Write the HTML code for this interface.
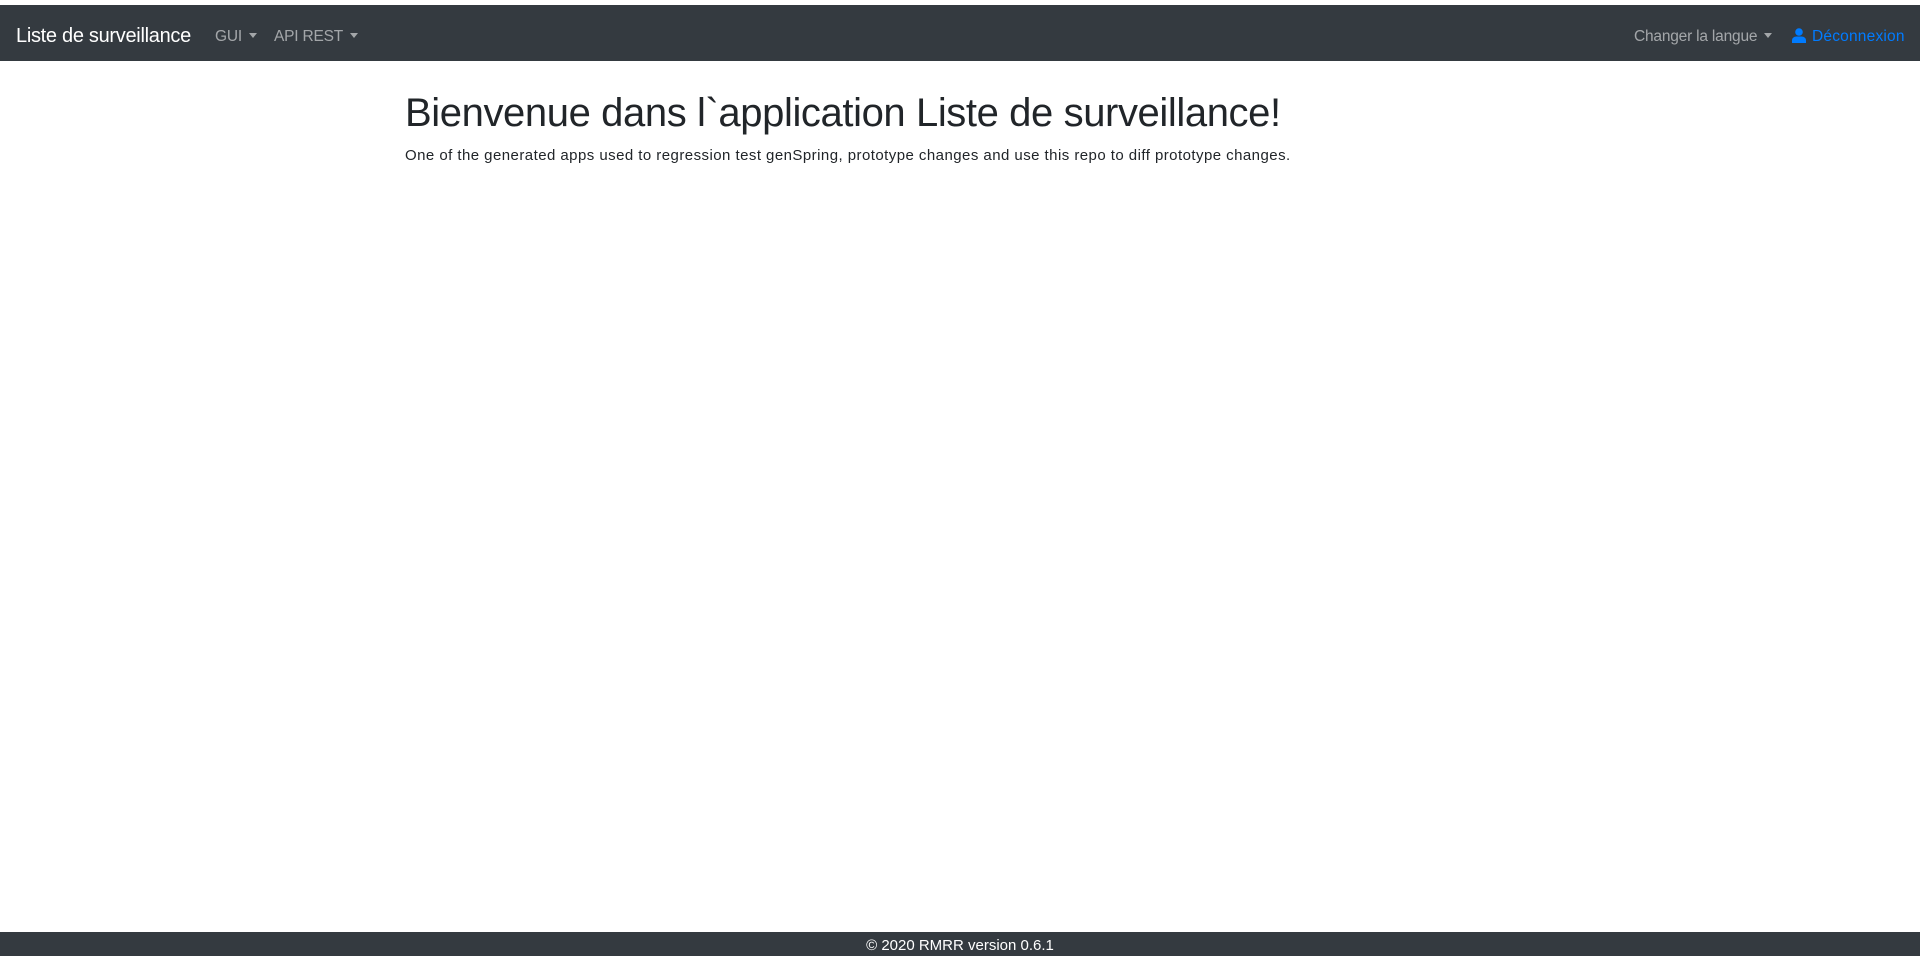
<!DOCTYPE html>
<html><head><meta charset="utf-8"><style>
html,body{margin:0;padding:0;width:1920px;height:966px;background:#fff;overflow:hidden;font-family:"Liberation Sans",sans-serif;color:#212529}
.nav{position:absolute;top:5px;left:0;width:1920px;height:56px;background:#343a40}
.nav span{position:absolute;white-space:nowrap}
.brand{left:16px;top:20px;font-size:20px;color:#fff;letter-spacing:-0.3px}
.link{top:23px;font-size:15.5px;color:rgba(255,255,255,.55);letter-spacing:-0.2px}
.caret{display:inline-block;margin-left:7px;vertical-align:3px;border-top:5px solid currentColor;border-left:4px solid transparent;border-right:4px solid transparent}
h1{position:absolute;left:405px;top:91px;margin:0;font-weight:300;font-size:40px;letter-spacing:-0.4px;white-space:nowrap}
p{position:absolute;left:405px;top:147px;margin:0;font-size:15px;letter-spacing:0.45px;white-space:nowrap}
.foot{position:absolute;left:0;top:932px;width:1920px;height:24px;background:#343a40;color:#fff;text-align:center;font-size:15px;line-height:28px}
</style></head><body>
<div class="nav">
<span class="brand">Liste de surveillance</span>
<span class="link" style="left:215px">GUI<i class="caret"></i></span>
<span class="link" style="left:274px">API REST<i class="caret"></i></span>
<span class="link" style="left:1634px">Changer la langue<i class="caret"></i></span>
<span class="link" style="left:1792px;color:#007bff;letter-spacing:0.2px">
<svg width="14" height="15" viewBox="0 0 14 15" style="vertical-align:-2px;margin-right:6px"><circle cx="7" cy="4" r="3.8" fill="#007bff"/><path d="M0 15v-2.5C0 10 2 8.5 4.5 8.5h5C12 8.5 14 10 14 12.5V15z" fill="#007bff"/></svg>Déconnexion</span>
</div>
<h1>Bienvenue dans l`application Liste de surveillance!</h1>
<p>One of the generated apps used to regression test genSpring, prototype changes and use this repo to diff prototype changes.</p>
<div class="foot">© 2020 RMRR version 0.6.1</div>
</body></html>
